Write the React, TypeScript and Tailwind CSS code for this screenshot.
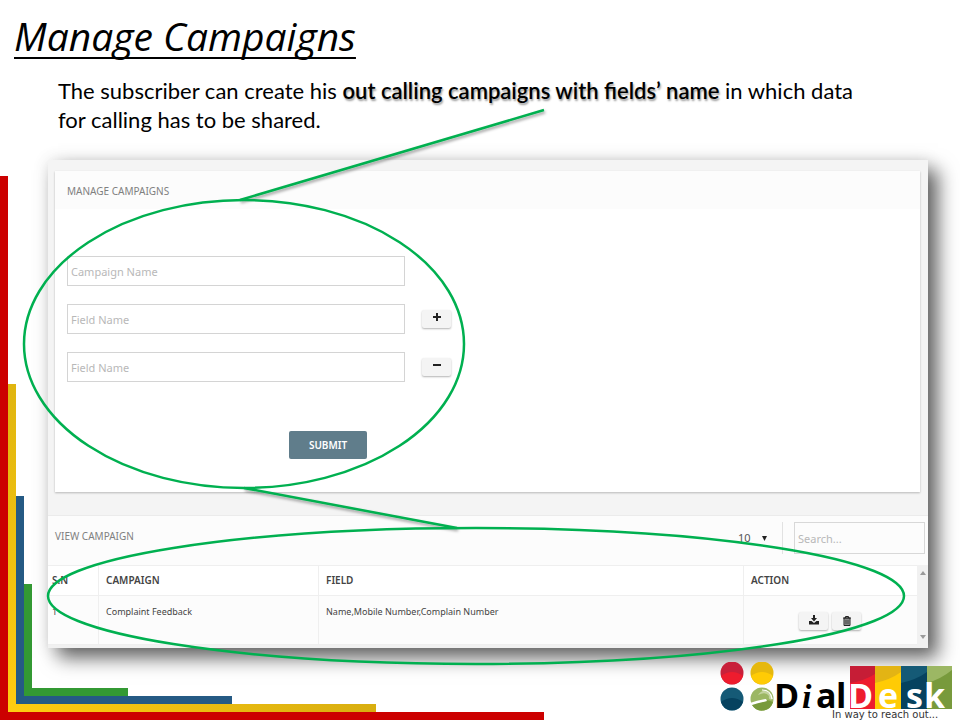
import React from "react";

function CornerFrame() {
  return (
    <div aria-hidden="true" className="pointer-events-none absolute bottom-0 left-0">
      <div className="absolute bottom-0 left-0 h-[544px] w-[544px] border-b-8 border-l-8 border-[#cc0000]" />
      <div className="absolute bottom-2 left-2 h-[328px] w-2 bg-linear-to-t from-[#ffcc11] to-[#e0b50f]" />
      <div className="absolute bottom-2 left-2 h-2 w-[368px] bg-linear-to-r from-[#ffcc11] to-[#d8ae10]" />
      <div className="absolute bottom-4 left-4 h-[208px] w-[216px] border-b-8 border-l-8 border-[#255a84]" />
      <div className="absolute bottom-6 left-6 h-[112px] w-[104px] border-b-8 border-l-8 border-[#339933]" />
    </div>
  );
}

function Annotations() {
  return (
    <svg
      aria-hidden="true"
      viewBox="0 0 960 720"
      preserveAspectRatio="none"
      className="pointer-events-none absolute inset-0 h-full w-full"
      fill="none"
      stroke="#00b050"
      strokeWidth="2.5"
    >
      <defs>
        <filter id="lineShadow" x="-10%" y="-20%" width="120%" height="150%">
          <feDropShadow dx="1" dy="2" stdDeviation="1.5" floodColor="#000" floodOpacity="0.4" />
        </filter>
      </defs>
      <g filter="url(#lineShadow)">
        <path d="M544 110 240 200" />
        <path d="M244 488 457 528" />
      </g>
      <ellipse cx="244" cy="344" rx="220" ry="144" />
      <ellipse cx="476" cy="596" rx="428" ry="68" />
    </svg>
  );
}

function Logo() {
  return (
    <svg viewBox="0 0 234 58" className="h-[58px] w-[234px]" role="img" aria-label="DialDesk">
      <circle cx="12" cy="11" r="11.500" fill="#c8203a" />
      <path d="M1 14Q12 6 23 14A11.500 11.500 0 0 1 1 14Z" fill="#ee1c2e" />
      <circle cx="42" cy="11" r="11.500" fill="#e6b80e" />
      <path d="M31 14Q42 6 53 14A11.500 11.500 0 0 1 31 14Z" fill="#ffcb05" />
      <circle cx="12" cy="37" r="11.500" fill="#155a76" />
      <path d="M1 40Q12 32 23 40A11.500 11.500 0 0 1 1 40Z" fill="#06425f" />
      <circle cx="42" cy="37" r="11.500" fill="#9cb764" />
      <path d="M32 43Q42 35 53 40A11.500 11.500 0 0 1 32 43Z" fill="#789a3c" />
      <path d="M30 41Q38 38 46 37L47 39Q39 41 32 43Z" fill="#fff" />
      <path d="M38 33C41 27 50 27 53 37Q48 39 49 34Q46 29 38 33Z" fill="#c4d3a0" />
      <path d="M42 28Q51 28 52 37" fill="none" stroke="#fff" strokeWidth="1.200" />

      <path d="M130 4h25v43h-25z" fill="#c61d36" />
      <path d="M130 21Q144 19 155 12V47H130Z" fill="#ee1c2e" />
      <path d="M155 4h26v43h-26z" fill="#e3b414" />
      <path d="M155 21Q170 18 181 10V47H155Z" fill="#ffcb05" />
      <path d="M181 4h26v43h-26z" fill="#155a76" />
      <path d="M181 21Q196 18 207 10V47H181Z" fill="#06425f" />
      <path d="M207 4h25v43h-25z" fill="#9cb764" />
      <path d="M207 21Q221 17 232 8V47H207Z" fill="#789a3c" />

      <g fontFamily="'Open Sans', sans-serif" fontWeight="700" fontSize="34">
        <text x="54" y="46">D</text>
        <text x="82" y="46" fontFamily="'Liberation Serif', serif" fontStyle="italic">i</text>
        <text x="96" y="46">a</text>
        <text x="116" y="46">l</text>
        <g fill="#fff">
          <text x="128" y="46">D</text>
          <text x="158" y="46">e</text>
          <text x="186" y="46">s</text>
          <text x="204" y="46">k</text>
        </g>
      </g>
      <text x="112" y="56" fontFamily="'DejaVu Sans', sans-serif" fontSize="10" fill="#333">
        In way to reach out...
      </text>
    </svg>
  );
}

function Field({ id, label }: { id: string; label: string }) {
  return (
    <input
      id={id}
      aria-label={label}
      placeholder={label}
      className="h-[30px] w-[338px] border border-[#d4d4d4] bg-white px-[3px] text-[11px] text-[#555] placeholder:text-[#b8b8b8] focus:outline-none"
    />
  );
}

const smallButton =
  "flex h-[18px] w-[29px] items-center justify-center rounded-xs bg-[#f4f4f4] text-[#222] shadow-[0_1px_2px_rgba(0,0,0,0.3)]";

function CampaignForm() {
  return (
    <section className="mr-2 ml-[7px] bg-white shadow-[0_1px_2px_rgba(0,0,0,0.25)]">
      <h2 className="flex h-[38px] items-center bg-[#fcfcfc] px-3 pt-[2px] text-[#808080]">MANAGE CAMPAIGNS</h2>
      <form className="flex h-[283px] flex-col px-3 pt-[47px]" onSubmit={(e) => e.preventDefault()}>
        <div className="flex flex-col gap-[18px]">
          <Field id="campaign" label="Campaign Name" />
          <div className="flex items-center gap-[17px]">
            <Field id="field-1" label="Field Name" />
            <button type="button" aria-label="Add field" className={smallButton}>
              <svg viewBox="0 0 8 8" className="mb-1 size-2" stroke="currentColor" strokeWidth="2">
                <path d="M0 4h8M4 0v8" />
              </svg>
            </button>
          </div>
          <div className="flex items-center gap-[17px]">
            <Field id="field-2" label="Field Name" />
            <button type="button" aria-label="Remove field" className={smallButton}>
              <svg viewBox="0 0 8 8" className="mb-1 size-2" stroke="currentColor" strokeWidth="2">
                <path d="M0 4h8" />
              </svg>
            </button>
          </div>
        </div>
        <div className="flex w-[338px] justify-end pt-[49px] pr-[38px]">
          <button type="submit" className="h-7 w-[78px] rounded-xs bg-[#607d8b] font-semibold text-white">
            SUBMIT
          </button>
        </div>
      </form>
    </section>
  );
}

function CampaignTable() {
  const cell = "border-r border-b border-[#efefef] px-[7px] text-left";
  return (
    <section className="border-t border-[#ebebeb] bg-[#fcfcfc]">
      <div className="flex h-[49px] justify-between pt-[6px] pr-[3px] pl-[7px]">
        <h2 className="flex h-[28px] items-center text-[#808080]">VIEW CAMPAIGN</h2>
        <div className="flex">
          <label className="relative flex h-8 items-center border-r border-[#e2e2e2] pr-3">
            <select
              aria-label="Rows per page"
              className="w-[32px] appearance-none bg-transparent text-[11px] text-[#555] focus:outline-none"
            >
              <option>10</option>
              <option>25</option>
            </select>
            <svg viewBox="0 0 5 5" className="pointer-events-none absolute right-[15px] size-[5px] fill-[#222]">
              <path d="M0 0h5L2.500 5z" />
            </svg>
          </label>
          <input
            type="search"
            aria-label="Search"
            placeholder="Search..."
            className="ml-[11px] h-8 w-[131px] border border-[#d8d8d8] bg-[#fcfcfc] px-[3px] text-[11px] placeholder:text-[#b8b8b8] focus:outline-none"
          />
        </div>
      </div>
      <div className="flex">
        <table className="w-full table-fixed border-separate border-spacing-0 border-t border-[#efefef] text-[#444]">
          <colgroup>
            <col className="w-[51px]" />
            <col className="w-[220px]" />
            <col />
            <col className="w-[173px]" />
          </colgroup>
          <thead>
            <tr className="h-[30px] bg-white text-[#444]">
              <th scope="col" className="border-r border-b border-[#efefef] pl-1 text-left font-semibold">S.N</th>
              <th scope="col" className={cell + " font-semibold"}>CAMPAIGN</th>
              <th scope="col" className={cell + " font-semibold"}>FIELD</th>
              <th scope="col" className="border-b border-[#efefef] px-[7px] text-left font-semibold">ACTION</th>
            </tr>
          </thead>
          <tbody>
            <tr className="h-[49px] align-top text-[9px] leading-4">
              <td className="border-r border-b border-[#efefef] pt-2 pl-1">1</td>
              <td className={cell + " pt-2"}>Complaint Feedback</td>
              <td className={cell + " pt-2"}>Name,Mobile Number,Complain Number</td>
              <td className="border-b border-[#efefef] pt-4 pl-[55px]">
                <div className="flex gap-1">
                  <button type="button" aria-label="Download" className={smallButton}>
                    <svg viewBox="0 0 10 10" className="mb-[2px] size-[10px] fill-current">
                      <path d="M4 0h2v3h2L5 6.500 2 3h2zM0 6h2.500L5 8 7.500 6H10v3.500H0z" />
                    </svg>
                  </button>
                  <button type="button" aria-label="Delete" className={smallButton}>
                    <svg viewBox="0 0 8 10" className="h-[10px] w-2" fill="none" stroke="currentColor">
                      <path d="M1 2h6v7.500H1z" fill="#aaa" />
                      <path d="M0 2h8M2.500 2V.500h3V2M3 3.500v5M5 3.500v5" />
                    </svg>
                  </button>
                </div>
              </td>
            </tr>
          </tbody>
        </table>
        <div
          aria-hidden="true"
          className="flex w-[11px] shrink-0 flex-col items-center justify-between bg-[#f1f1f1] py-[6px]"
        >
          <svg viewBox="0 0 6 4" className="h-1 w-[6px] fill-[#9a9a9a]">
            <path d="M0 4h6L3 0z" />
          </svg>
          <svg viewBox="0 0 6 4" className="h-1 w-[6px] fill-[#9a9a9a]">
            <path d="M0 0h6L3 4z" />
          </svg>
        </div>
      </div>
      <div className="h-[3px] bg-[#f1f1f1]" />
    </section>
  );
}

export default function App() {
  return (
    <main className="relative flex min-h-screen flex-col overflow-hidden bg-white">
      <CornerFrame />
      <h1 className="pt-3 pl-[14px] font-['Open_Sans',sans-serif] text-[39px] leading-[48px] font-medium text-black italic underline decoration-2 underline-offset-[6px] [text-decoration-skip-ink:none]">
        Manage Campaigns
      </h1>
      <p className="mr-[84px] ml-[58px] pt-4 font-['Lato',sans-serif] text-[22px] leading-[29px] text-black">
        The subscriber can create his{" "}
        <strong className="font-semibold [text-shadow:1px_2px_2px_rgba(0,0,0,0.4)]">
          out calling campaigns with fields’ name
        </strong>{" "}
        in which data for calling has to be shared.
      </p>
      <div className="relative mt-[26px] mr-8 ml-12 bg-[#f4f4f4] pt-[11px] font-['Noto_Sans',sans-serif] text-[10px] shadow-[10px_10px_18px_rgba(0,0,0,0.6),0_0_16px_rgba(0,0,0,0.1)]">
        <CampaignForm />
        <div className="h-[23px]" />
        <CampaignTable />
      </div>
      <footer className="relative mt-auto flex justify-end pr-[6px]">
        <Logo />
      </footer>
      <Annotations />
    </main>
  );
}
